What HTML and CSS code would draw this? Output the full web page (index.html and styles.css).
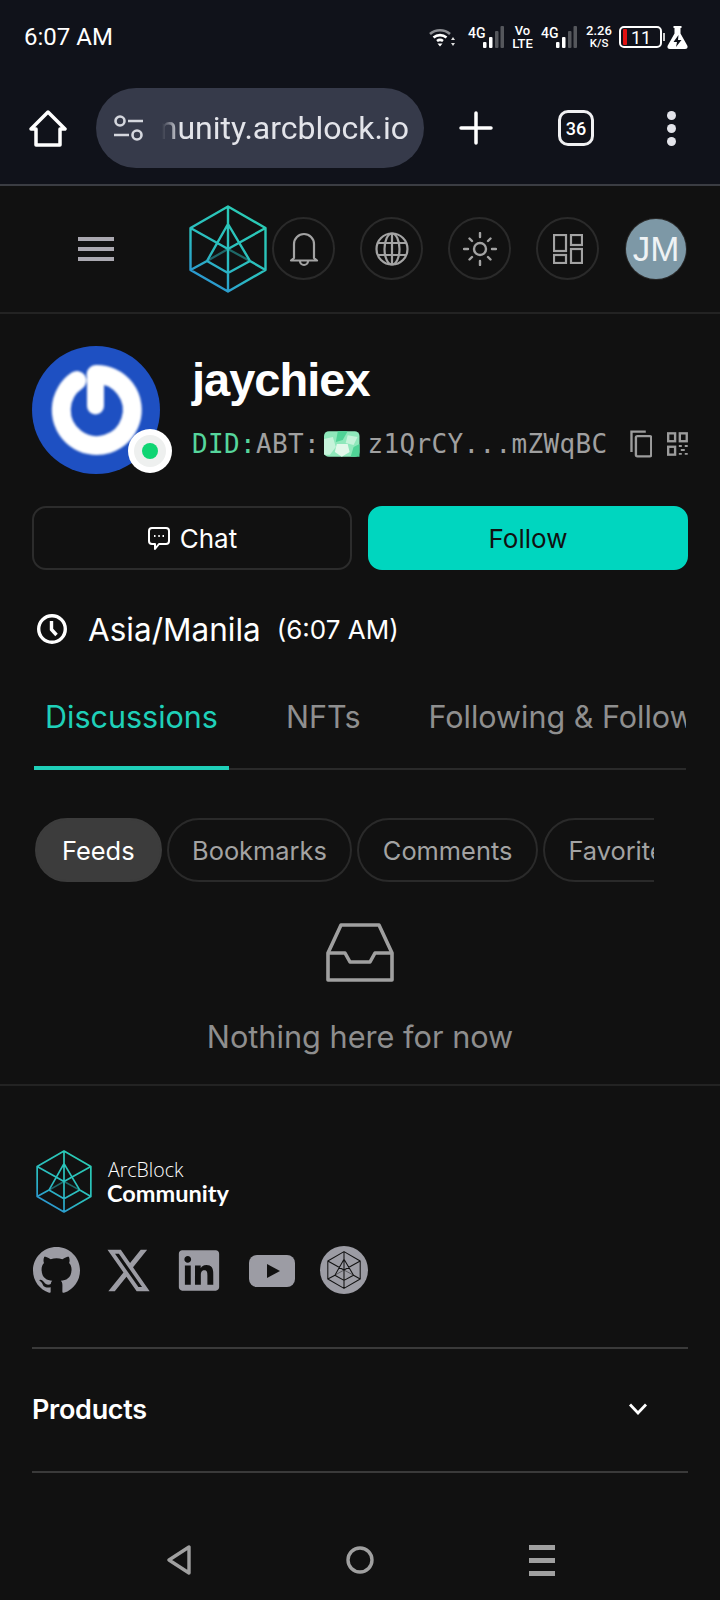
FILE: index.html
```html
<!DOCTYPE html>
<html lang="en">
<head>
  <meta charset="UTF-8" />
  <meta name="viewport" content="width=device-width, initial-scale=1.0" />
  <title>jaychiex - ArcBlock Community</title>
  <link rel="stylesheet" href="styles.css">
</head>
<body>
  <!-- shared logo shape -->
  <svg class="defs" width="0" height="0">
    <defs>
      <linearGradient id="hexGrad" gradientUnits="userSpaceOnUse" x1="62" y1="4" x2="8" y2="84">
        <stop offset="0" stop-color="#2accb4" />
        <stop offset="0.6" stop-color="#2bbcc0" />
        <stop offset="1" stop-color="#2b8bd6" />
      </linearGradient>
      <symbol id="hex" viewBox="0 0 78 88">
        <path d="M39 1.500 76.500 23V65L39 86.500 1.500 65V23ZM1.500 23 39 44 76.500 23M39 1.500V86.500M39 19 18 56 39 68 61 56ZM1.500 65 18 56M76.500 65 61 56" fill="none" stroke-width="2.400" stroke-linejoin="round" />
        <path d="M18 56 39 44 61 56" fill="none" stroke-width="2.200" opacity="0.5" />
      </symbol>
    </defs>
  </svg>

  <header class="browser">
    <div class="status">
      <span class="clock">6:07 AM</span>
      <div class="status-icons">
        <svg class="wifi" width="26" height="20" viewBox="0 0 26 20">
          <path d="M1 7A15 15 0 0 1 21 7" fill="none" stroke="#8b8d92" stroke-width="2.600" />
          <path d="M4.500 10.500A10 10 0 0 1 17.500 10.500" fill="none" stroke="#fff" stroke-width="2.600" />
          <path d="M8 14A5 5 0 0 1 14 14" fill="none" stroke="#fff" stroke-width="2.600" />
          <path d="M8.500 16.500H13.500L11 19.500Z" fill="#fff" />
          <path d="M24 10 26 13H22ZM24 19 22 16H26Z" fill="#ddd" />
        </svg>
        <div class="signal">
          <span class="net">4G</span>
          <svg width="21" height="22" viewBox="0 0 21 22">
            <rect x="0" y="16" width="3.500" height="6" rx="1" fill="#fff" />
            <rect x="6" y="11" width="3.500" height="11" rx="1" fill="#fff" />
            <rect x="12" y="5" width="3.500" height="17" rx="1" fill="#55575c" />
            <rect x="17.500" y="0" width="3.500" height="22" rx="1" fill="#55575c" />
          </svg>
        </div>
        <div class="stack volte"><span>Vo</span><span>LTE</span></div>
        <div class="signal">
          <span class="net">4G</span>
          <svg width="21" height="22" viewBox="0 0 21 22">
            <rect x="0" y="16" width="3.500" height="6" rx="1" fill="#fff" />
            <rect x="6" y="11" width="3.500" height="11" rx="1" fill="#fff" />
            <rect x="12" y="5" width="3.500" height="17" rx="1" fill="#55575c" />
            <rect x="17.500" y="0" width="3.500" height="22" rx="1" fill="#55575c" />
          </svg>
        </div>
        <div class="stack speed"><span>2.26</span><span class="unit">K/S</span></div>
        <div class="battery">
          <span class="battery-level"></span>
          <span class="battery-num">11</span>
        </div>
        <span class="battery-nub"></span>
        <svg width="21" height="23" viewBox="0 0 21 23">
          <path d="M6.500 0H14.500V2H13.500V7.500L20.500 20Q21 23 18 23H3Q0 23 .5 20L7.500 7.500V2H6.500Z" fill="#fff" />
          <path d="M11.500 9 6.500 16H10L9 21 14.500 14H11Z" fill="#10121a" />
        </svg>
      </div>
    </div>

    <div class="toolbar">
      <svg class="home-icon" width="38" height="37" viewBox="0 0 38 37">
        <path d="M19 2 36 19H31V35H7V19H2Z" fill="none" stroke="#fff" stroke-width="3.500" stroke-linejoin="round" />
      </svg>
      <div class="omnibox">
        <svg width="31" height="26" viewBox="0 0 31 26">
          <circle cx="7" cy="6" r="4.500" fill="none" stroke="#d5d7de" stroke-width="2.600" />
          <path d="M15 6H30M1 20H16" stroke="#d5d7de" stroke-width="2.600" />
          <circle cx="24" cy="20" r="4.500" fill="none" stroke="#d5d7de" stroke-width="2.600" />
        </svg>
        <div class="url"><span>community.arcblock.io</span></div>
      </div>
      <svg class="plus-icon" width="34" height="34" viewBox="0 0 34 34">
        <path d="M17 2V32M2 17H32" stroke="#fff" stroke-width="3.500" stroke-linecap="round" />
      </svg>
      <div class="tab-count">36</div>
      <div class="kebab"><i></i><i></i><i></i></div>
    </div>
  </header>

  <nav class="site-nav">
    <div class="burger"><i></i><i></i><i></i></div>
    <svg class="site-logo" width="78" height="88"><use href="#hex" stroke="url(#hexGrad)" /></svg>
    <div class="nav-actions">
      <span class="round-btn">
        <svg width="30" height="36" viewBox="0 0 30 36" fill="none" stroke="#a3a3a3" stroke-width="2.200">
          <path d="M5 27V13A10 10 0 0 1 25 13V27L28 29.500H2Z" stroke-linejoin="round" />
          <path d="M11 30A4 4 0 0 0 19 30" />
        </svg>
      </span>
      <span class="round-btn">
        <svg width="34" height="34" viewBox="0 0 34 34" fill="none" stroke="#a3a3a3" stroke-width="2.200">
          <circle cx="17" cy="17" r="15.500" />
          <ellipse cx="17" cy="17" rx="7.500" ry="15.500" />
          <path d="M3 11H31M3 23H31M17 2V32" />
        </svg>
      </span>
      <span class="round-btn">
        <svg width="34" height="34" viewBox="0 0 34 34" fill="none" stroke="#a3a3a3" stroke-width="2.400" stroke-linecap="round">
          <circle cx="17" cy="17" r="6" />
          <path d="M17 1V5M17 29V33M1 17H5M29 17H33M6.500 6.500 9 9M25 25 27.500 27.500M6.500 27.500 9 25M25 9 27.500 6.500" />
        </svg>
      </span>
      <span class="round-btn">
        <svg width="30" height="30" viewBox="0 0 30 30" fill="none" stroke="#a3a3a3" stroke-width="2.200">
          <rect x="1" y="1" width="12" height="16" />
          <rect x="18" y="1" width="11" height="10" />
          <rect x="1" y="21" width="12" height="8" />
          <rect x="18" y="15" width="11" height="14" />
        </svg>
      </span>
    </div>
    <div class="user-avatar">JM</div>
  </nav>

  <section class="profile">
    <div class="avatar-wrap">
      <svg class="avatar" width="128" height="128" viewBox="0 0 128 128">
        <circle cx="64" cy="64" r="64" fill="#1e50c2" />
        <g class="avatar-mark" fill="none" stroke="#fff" stroke-linecap="round">
          <path d="M45 34.500A35.500 35.500 0 1 0 64 28.500" stroke-width="19" />
          <path d="M63.500 30V60" stroke-width="17" />
        </g>
      </svg>
      <span class="online"><i></i></span>
    </div>
    <div class="profile-info">
      <h1 class="name">jaychiex</h1>
      <div class="did">
        <span class="did-green">DID:</span><span>ABT:</span>
        <svg class="identicon" width="36" height="26" viewBox="0 0 36 26">
          <rect width="36" height="26" rx="5" fill="#8fe8bb" />
          <g class="identicon-shapes">
            <path d="M14 0H24L19 9 12 11ZM30 16 36 13V26H27Z" fill="#4fd396" />
            <path d="M0 8 9 6 12 16 6 24H0ZM24 4 34 6 30 14 22 12Z" fill="#c6f3da" />
            <path d="M13 13H24L26 21 18 26 11 21Z" fill="#e2f8ea" />
          </g>
        </svg>
        <span class="did-addr">z1QrCY...mZWqBC</span>
        <svg class="copy-icon" width="23" height="28" viewBox="0 0 23 28" fill="none" stroke="#9c9c9c" stroke-width="2.400">
          <path d="M1.500 22V1.500H16" />
          <rect x="6" y="6" width="15.500" height="20.500" rx="1.500" />
        </svg>
        <svg class="qr-icon" width="21" height="24" viewBox="0 0 21 24" fill="none" stroke="#9c9c9c" stroke-width="2.400">
          <rect x="1.200" y="1.200" width="7" height="8" />
          <rect x="13" y="1.200" width="7" height="8" />
          <rect x="1.200" y="14.800" width="7" height="8" />
          <path d="M12 14H15M18 14H21M14 18H18M12 22H15M18 22H21" stroke-width="2" />
        </svg>
      </div>
    </div>
  </section>

  <div class="actions">
    <button class="btn btn-outline">
      <svg width="24" height="25" viewBox="0 0 24 25" fill="none" stroke="#fff" stroke-width="2">
        <path d="M5 2H19Q22 2 22 5V15Q22 18 19 18H12L8 23V18H5Q2 18 2 15V5Q2 2 5 2Z" stroke-linejoin="round" />
        <path d="M7 10H8.500M11.300 10H12.800M15.500 10H17" />
      </svg>
      Chat
    </button>
    <button class="btn btn-primary">Follow</button>
  </div>

  <div class="timezone">
    <svg width="30" height="30" viewBox="0 0 30 30" fill="none" stroke="#fff" stroke-width="3.400">
      <circle cx="15" cy="15" r="13.300" />
      <path d="M14.500 7V15.500L19.500 21" />
    </svg>
    <span class="tz-name">Asia/Manila</span>
    <span class="tz-time">(6:07 AM)</span>
  </div>

  <div class="tabs">
    <span class="tab tab-active">Discussions</span>
    <span class="tab">NFTs</span>
    <span class="tab">Following &amp; Followers</span>
  </div>

  <div class="chips">
    <span class="chip chip-active">Feeds</span>
    <span class="chip">Bookmarks</span>
    <span class="chip">Comments</span>
    <span class="chip">Favorites</span>
  </div>

  <div class="empty">
    <svg width="68" height="59" viewBox="0 0 68 59" fill="none" stroke="#a0a0a0" stroke-width="3.600" stroke-linejoin="round">
      <path d="M2 30 15 2H53L66 30V57H2Z" />
      <path d="M2 30H19L24 39H44L49 30H66" />
    </svg>
    <p class="empty-text">Nothing here for now</p>
  </div>

  <footer class="footer">
    <div class="brand">
      <svg width="56" height="63"><use href="#hex" stroke="url(#hexGrad)" /></svg>
      <div class="brand-text">
        <span class="brand-top">ArcBlock</span>
        <span class="brand-bottom">Community</span>
      </div>
    </div>

    <div class="social">
      <svg width="47" height="47" viewBox="0 0 16 16" fill="#9c9ca4">
        <path d="M8 0C3.580 0 0 3.580 0 8c0 3.540 2.290 6.530 5.470 7.590.4.070.55-.17.55-.38 0-.19-.01-.82-.01-1.490-2.010.37-2.530-.49-2.690-.94-.09-.23-.48-.94-.82-1.130-.28-.15-.68-.52-.01-.53.63-.01 1.080.58 1.230.82.720 1.210 1.870.870 2.330.660.070-.520.280-.870.510-1.070-1.780-.2-3.640-.890-3.640-3.950 0-.870.310-1.590.820-2.150-.080-.2-.360-1.020.080-2.120 0 0 .670-.210 2.200.820.640-.180 1.320-.270 2-.270s1.360.09 2 .270c1.530-1.040 2.200-.820 2.200-.820.440 1.100.160 1.920.080 2.120.510.560.820 1.270.820 2.150 0 3.070-1.870 3.750-3.650 3.950.290.250.540.730.540 1.480 0 1.070-.010 1.930-.010 2.200 0 .210.150.460.550.380A8.010 8.010 0 0 0 16 8c0-4.420-3.580-8-8-8z" />
      </svg>
      <svg width="43" height="47" viewBox="1 1 22 22" fill="#9c9ca4" preserveAspectRatio="none">
        <path d="M18.244 2.250h3.308l-7.227 8.260 8.502 11.240H16.170l-5.214-6.817L4.990 21.750H1.680l7.730-8.835L1.254 2.250H8.080l4.713 6.231zm-1.161 17.520h1.833L7.084 4.126H5.117z" />
      </svg>
      <svg width="44" height="47" viewBox="-1 -2 26 28" fill="#9c9ca4">
        <path d="M22 0H2C.9 0 0 .9 0 2v20c0 1.100.9 2 2 2h20c1.100 0 2-.9 2-2V2c0-1.100-.9-2-2-2zM7.100 20.500H3.600V9h3.500v11.500zM5.300 7.400c-1.100 0-2-.9-2-2s.9-2 2-2 2 .9 2 2-.9 2-2 2zm15.200 13.100H17v-5.600c0-1.300 0-3-1.800-3s-2.100 1.400-2.100 2.900v5.700H9.600V9h3.400v1.600c.5-.9 1.600-1.900 3.400-1.900 3.600 0 4.100 2.400 4.100 5.500v6.300z" />
      </svg>
      <svg class="yt-icon" width="46" height="47" viewBox="0 0 46 47">
        <rect y="8" width="46" height="32" rx="8" fill="#9c9ca4" />
        <path d="M18 17 31 24 18 31Z" fill="#111" />
      </svg>
      <span class="social-hex">
        <svg width="34" height="38"><use href="#hex" stroke="#111" /></svg>
      </span>
    </div>

    <div class="accordion">
      <span class="accordion-title">Products</span>
      <svg width="20" height="12" viewBox="0 0 20 12" fill="none" stroke="#fff" stroke-width="2.800">
        <path d="M2 1.500 10 10 18 1.500" />
      </svg>
    </div>
  </footer>

  <div class="sys-nav">
    <svg width="24" height="30" viewBox="0 0 24 30" fill="none" stroke="#a0a0a0" stroke-width="3.400" stroke-linejoin="round">
      <path d="M22 2V28L2 15Z" />
    </svg>
    <svg width="28" height="28" viewBox="0 0 28 28" fill="none" stroke="#a0a0a0" stroke-width="3.400">
      <circle cx="14" cy="14" r="12" />
    </svg>
    <div class="sys-menu"><i></i><i></i><i></i></div>
  </div>
</body>
</html>
```

FILE: styles.css
```css
* {
  box-sizing: border-box;
}
body {
  margin: 0;
  width: 720px;
  height: 1600px;
  overflow: hidden;
  display: flex;
  flex-direction: column;
  background: #111111;
  color: #fff;
  font-family: 'Inter', 'Liberation Sans', sans-serif;
}
.defs {
  display: block;
}
i {
  display: block;
}

/* browser chrome */
.browser {
  background: #10121a;
  border-bottom: 2px solid #3b3d43;
  font-family: 'Roboto', sans-serif;
}
.status {
  height: 74px;
  padding: 0 32px 0 24px;
  display: flex;
  align-items: center;
  justify-content: space-between;
}
.clock {
  font-size: 24px;
}
.status-icons {
  display: flex;
  align-items: center;
  font-weight: 500;
}
.status-icons > * {
  flex-shrink: 0;
}
.wifi {
  margin-right: 13px;
}
.signal {
  display: flex;
  align-items: flex-end;
  width: 36px;
  height: 22px;
}
.net {
  font-size: 14px;
  line-height: 14px;
  align-self: flex-start;
  width: 15px;
  white-space: nowrap;
}
.stack {
  display: flex;
  flex-direction: column;
  align-items: center;
  font-size: 13px;
  line-height: 13px;
}
.volte {
  width: 19px;
  margin: 0 9px;
}
.speed {
  width: 26px;
  margin: 0 7px 0 9px;
}
.unit {
  font-size: 11.500px;
}
.battery {
  width: 43px;
  height: 22px;
  border: 2px solid #fff;
  border-radius: 5px;
  display: flex;
  align-items: center;
  padding-left: 2px;
}
.battery-level {
  width: 4px;
  height: 16px;
  background: #e01010;
  border-radius: 1px;
}
.battery-num {
  font-size: 18px;
  font-weight: 400;
  margin-left: 4px;
}
.battery-nub {
  width: 2px;
  height: 8px;
  background: #ccc;
  margin: 0 2px 0 1px;
}
.toolbar {
  height: 110px;
  padding: 14px 0 16px 30px;
  display: flex;
  align-items: center;
}
.home-icon {
  margin-left: -1px;
}
.omnibox {
  width: 328px;
  height: 80px;
  margin-left: 29px;
  padding: 0 15px 0 17px;
  border-radius: 40px;
  background: #363a4a;
  display: flex;
  align-items: center;
}
.url {
  flex: 1;
  min-width: 0;
  margin-left: 18px;
  display: flex;
  justify-content: flex-end;
  overflow: hidden;
  font-size: 32px;
  color: #e3e4ea;
  white-space: nowrap;
  -webkit-mask-image: linear-gradient(to right, transparent 0, #000 18px);
  mask-image: linear-gradient(to right, transparent 0, #000 18px);
}
.url span {
  flex-shrink: 0;
}
.plus-icon {
  margin-left: 35px;
}
.tab-count {
  width: 36px;
  height: 36px;
  margin-left: 65px;
  border: 3.500px solid #f0f0f2;
  border-radius: 10px;
  display: flex;
  align-items: center;
  justify-content: center;
  font-size: 18px;
  font-weight: 500;
}
.kebab {
  margin-left: 73px;
  display: flex;
  flex-direction: column;
  gap: 4px;
}
.kebab i {
  width: 9px;
  height: 9px;
  border-radius: 50%;
  background: #e3e4ea;
}

/* site header */
.site-nav {
  height: 128px;
  padding: 0 0 1px 78px;
  border-bottom: 2px solid #232323;
  display: flex;
  align-items: center;
}
.burger {
  width: 36px;
  display: flex;
  flex-direction: column;
  gap: 6px;
}
.burger i {
  height: 4px;
  background: #aaa8b0;
}
.site-logo {
  margin-left: 75px;
}
.nav-actions {
  margin-left: 5px;
  display: flex;
  gap: 25px;
}
.round-btn {
  width: 63px;
  height: 63px;
  border: 2px solid #2a2a2a;
  border-radius: 50%;
  display: flex;
  align-items: center;
  justify-content: center;
}
.user-avatar {
  width: 60px;
  height: 60px;
  margin-left: 27px;
  border-radius: 50%;
  background: #7d98a6;
  box-shadow: 0 0 0 1px #2a2a2a;
  display: flex;
  align-items: center;
  justify-content: center;
  font-family: 'Liberation Sans', sans-serif;
  font-size: 35px;
  color: #eef2f4;
}

/* profile */
.profile {
  padding: 32px 32px 0;
  display: flex;
  gap: 32px;
}
.avatar-wrap {
  position: relative;
  width: 128px;
  height: 128px;
  flex-shrink: 0;
}
.avatar {
  display: block;
}
.avatar-mark {
  filter: blur(1px);
}
.online {
  position: absolute;
  right: -12px;
  bottom: 1px;
  width: 44px;
  height: 44px;
  border-radius: 50%;
  background: #fff;
  display: flex;
  align-items: center;
  justify-content: center;
}
.online i {
  width: 16px;
  height: 16px;
  border-radius: 50%;
  background: #0fd573;
  box-shadow: 0 0 0 8px #eef0ef;
}
.profile-info {
  min-width: 0;
  flex: 1;
}
.name {
  margin: 6px 0 0;
  font-family: 'Liberation Sans', sans-serif;
  font-size: 47px;
  line-height: 56px;
  font-weight: 700;
  letter-spacing: -1px;
}
.did {
  margin-top: 21px;
  height: 30px;
  display: flex;
  align-items: center;
  font-family: 'DejaVu Sans Mono', monospace;
  font-size: 26px;
  letter-spacing: 0.35px;
  color: #a0a0a0;
  white-space: nowrap;
}
.did-green {
  color: #56d69c;
}
.identicon {
  margin: 0 8px 0 4px;
}
.identicon-shapes {
  filter: blur(0.6px);
}
.copy-icon {
  margin-left: 22px;
}
.qr-icon {
  margin-left: 15px;
}

/* buttons */
.actions {
  margin-top: 32px;
  padding: 0 32px;
  display: flex;
  gap: 16px;
}
.btn {
  flex: 1;
  height: 64px;
  padding: 0;
  border: 2px solid transparent;
  border-radius: 14px;
  font-family: inherit;
  font-size: 26px;
  display: flex;
  align-items: center;
  justify-content: center;
  gap: 9px;
}
.btn-outline {
  background: transparent;
  border-color: #2c2c2c;
  color: #fff;
}
.btn-primary {
  background: #00d6bf;
  border-color: #00d6bf;
  color: #111;
}

/* timezone */
.timezone {
  margin-top: 39px;
  padding-left: 37px;
  height: 40px;
  display: flex;
  align-items: center;
}
.tz-name {
  margin-left: 21px;
  font-size: 31.500px;
}
.tz-time {
  margin-left: 16px;
  font-size: 26px;
}

/* tabs */
.tabs {
  margin: 50px 34px 0;
  height: 71px;
  display: flex;
  gap: 46px;
  overflow: hidden;
  box-shadow: inset 0 -2px 0 #2a2a2a;
  white-space: nowrap;
}
.tab {
  padding: 0 11px;
  font-size: 30.500px;
  line-height: 36px;
  color: #8f8f8f;
}
.tab-active {
  color: #1fd0b9;
  box-shadow: inset 0 -4px 0 #1fd0b9;
}
.chips {
  margin: 48px 0 0 35px;
  width: 619px;
  display: flex;
  gap: 5px;
  overflow: hidden;
}
.chip {
  height: 64px;
  padding: 0 23.500px;
  flex-shrink: 0;
  border: 2px solid #2a2a2a;
  border-radius: 32px;
  display: flex;
  align-items: center;
  font-size: 25.400px;
  color: #a3a3a3;
}
.chip-active {
  padding: 0 25px;
  background: #3c3c3c;
  border-color: #3c3c3c;
  color: #fff;
}

/* empty state */
.empty {
  margin-top: 41px;
  display: flex;
  flex-direction: column;
  align-items: center;
}
.empty svg {
  display: block;
}
.empty-text {
  margin: 37px 0 0;
  font-size: 30.700px;
  line-height: 36px;
  color: #8e8e8e;
}

/* footer */
.footer {
  margin-top: 29px;
  border-top: 2px solid #232323;
  padding: 64px 32px 0;
}
.brand {
  padding-left: 4px;
  display: flex;
  align-items: center;
  gap: 16px;
}
.brand-text {
  display: flex;
  flex-direction: column;
}
.brand-top {
  font-family: 'Open Sans', sans-serif;
  font-size: 19.500px;
  line-height: 24px;
  font-weight: 300;
}
.brand-bottom {
  margin-left: -1px;
  font-family: 'Lato', sans-serif;
  font-size: 23.500px;
  line-height: 23px;
  font-weight: 700;
}
.social {
  margin-top: 33px;
  padding-left: 1px;
  display: flex;
  align-items: center;
  gap: 27px;
}
.yt-icon {
  margin-left: 1px;
  margin-right: -2px;
}
.social-hex {
  width: 48px;
  height: 48px;
  border-radius: 50%;
  background: #9c9ca4;
  display: flex;
  align-items: center;
  justify-content: center;
}
.accordion {
  margin-top: 53px;
  height: 126px;
  padding: 0 40px 2px 0;
  border-top: 2px solid #3a3a3a;
  border-bottom: 2px solid #3a3a3a;
  display: flex;
  align-items: center;
  justify-content: space-between;
}
.accordion-title {
  font-size: 27px;
  font-weight: 600;
  letter-spacing: -0.3px;
}

/* android nav bar */
.sys-nav {
  margin-top: auto;
  height: 80px;
  padding-left: 1px;
  display: flex;
  align-items: center;
  justify-content: center;
  gap: 155px;
}
.sys-menu {
  width: 26px;
  display: flex;
  flex-direction: column;
  gap: 8px;
}
.sys-menu i {
  height: 5px;
  background: #a0a0a0;
}
```
